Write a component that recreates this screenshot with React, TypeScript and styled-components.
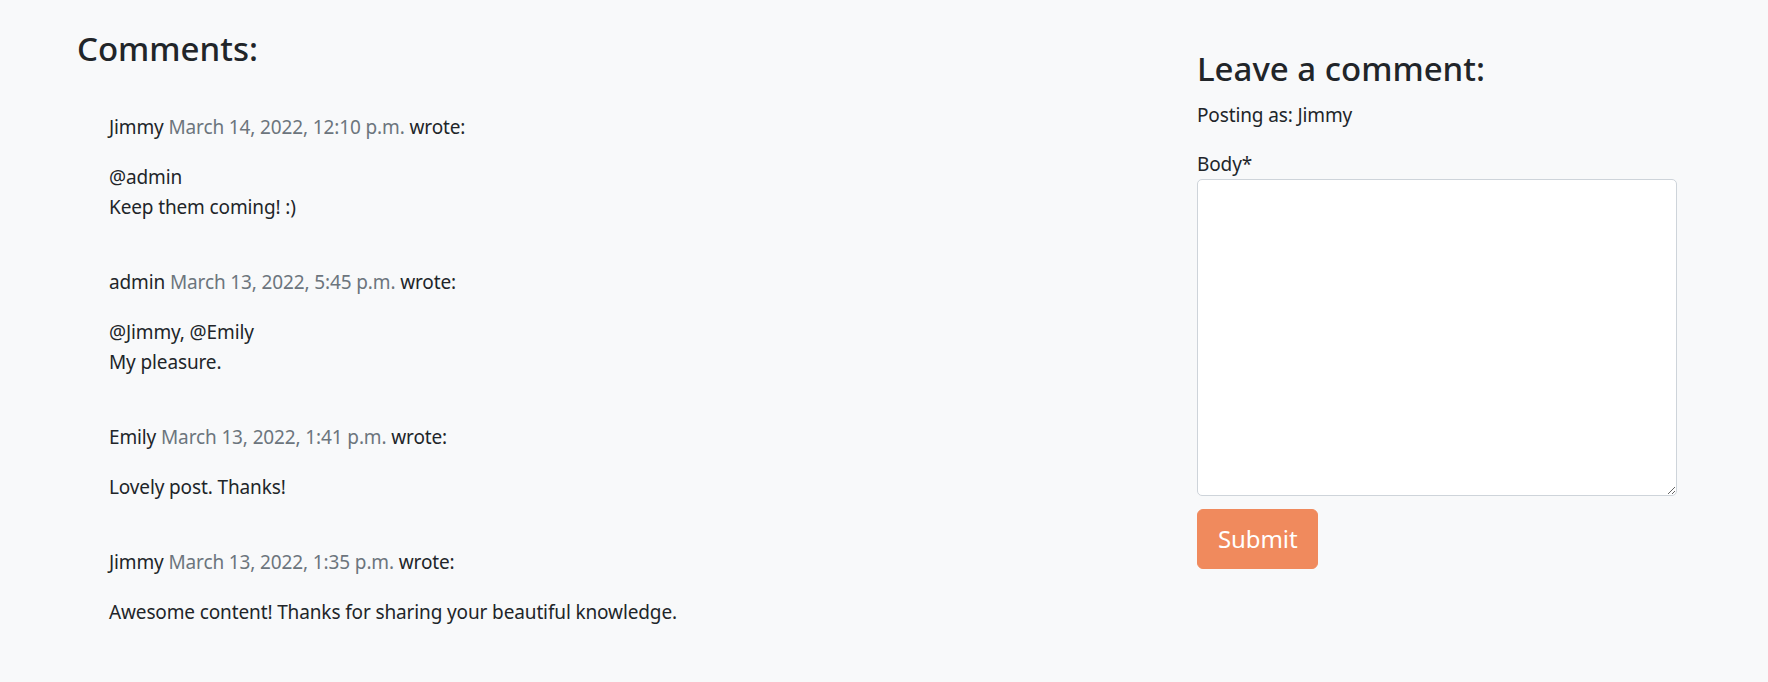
import React from "react";
import styled, { createGlobalStyle } from "styled-components";

const GlobalStyle = createGlobalStyle`
  html, body {
    margin: 0;
    padding: 0;
    background: #f8f9fa;
  }
  body {
    font-family: "Noto Sans", "Open Sans", sans-serif;
    font-size: 19px;
    line-height: 30px;
    letter-spacing: -0.13px;
    color: #212529;
  }
  * { box-sizing: border-box; }
`;

const Page = styled.div`
  display: flex;
  align-items: flex-start;
  padding: 0 91px 0 77px;
  min-height: 682px;
`;

const LeftColumn = styled.section`
  flex: 1;
  display: flex;
  flex-direction: column;
`;

const RightColumn = styled.section`
  flex: 0 0 480px;
  display: flex;
  flex-direction: column;
  align-items: flex-start;
`;

const Heading = styled.h3<{ $top: number }>`
  margin: ${(p) => p.$top}px 0 0;
  font-size: 33px;
  line-height: 42px;
  font-weight: 500;
  letter-spacing: 0;
  color: #212529;
`;

const CommentList = styled.div`
  display: flex;
  flex-direction: column;
  gap: 45px;
  padding-left: 32px;
  margin-top: 42px;
`;

const Comment = styled.article`
  display: flex;
  flex-direction: column;
  gap: 20px;
`;

const Meta = styled.p`
  margin: 0;
`;

const Muted = styled.span`
  color: #6c757d;
`;

const Body = styled.p`
  margin: 0;
`;

const PostingAs = styled.p`
  margin: 10px 0 20px;
`;

const Label = styled.label`
  display: block;
  line-height: 29px;
`;

const TextArea = styled.textarea`
  display: block;
  width: 480px;
  height: 317px;
  margin: 0;
  background: #fff;
  border: 1px solid #ced4da;
  border-radius: 5px;
  font: inherit;
  padding: 8px 15px;
  resize: vertical;
`;

const SubmitButton = styled.button`
  margin-top: 13px;
  height: 60px;
  padding: 0 20px;
  background: #f08a5d;
  border: 1px solid #f08a5d;
  border-radius: 6px;
  color: #fff;
  font-family: "Noto Sans", "Open Sans", sans-serif;
  font-size: 24px;
  line-height: 36px;
  letter-spacing: -0.1px;
  cursor: pointer;
`;

const comments = [
  {
    author: "Jimmy",
    date: "March 14, 2022, 12:10 p.m.",
    lines: ["@admin", "Keep them coming! :)"],
  },
  {
    author: "admin",
    date: "March 13, 2022, 5:45 p.m.",
    lines: ["@Jimmy, @Emily", "My pleasure."],
  },
  {
    author: "Emily",
    date: "March 13, 2022, 1:41 p.m.",
    lines: ["Lovely post. Thanks!"],
  },
  {
    author: "Jimmy",
    date: "March 13, 2022, 1:35 p.m.",
    lines: ["Awesome content! Thanks for sharing your beautiful knowledge."],
  },
];

export default function App() {
  return (
    <>
      <GlobalStyle />
      <Page>
        <LeftColumn>
          <Heading $top={28}>Comments:</Heading>
          <CommentList>
            {comments.map((c, i) => (
              <Comment key={i}>
                <Meta>
                  {c.author} <Muted>{c.date}</Muted> wrote:
                </Meta>
                <Body>
                  {c.lines.map((l, j) => (
                    <React.Fragment key={j}>
                      {j > 0 && <br />}
                      {l}
                    </React.Fragment>
                  ))}
                </Body>
              </Comment>
            ))}
          </CommentList>
        </LeftColumn>
        <RightColumn>
          <Heading $top={48}>Leave a comment:</Heading>
          <PostingAs>Posting as: Jimmy</PostingAs>
          <Label htmlFor="body">Body*</Label>
          <TextArea id="body" name="body" />
          <SubmitButton type="button">Submit</SubmitButton>
        </RightColumn>
      </Page>
    </>
  );
}
